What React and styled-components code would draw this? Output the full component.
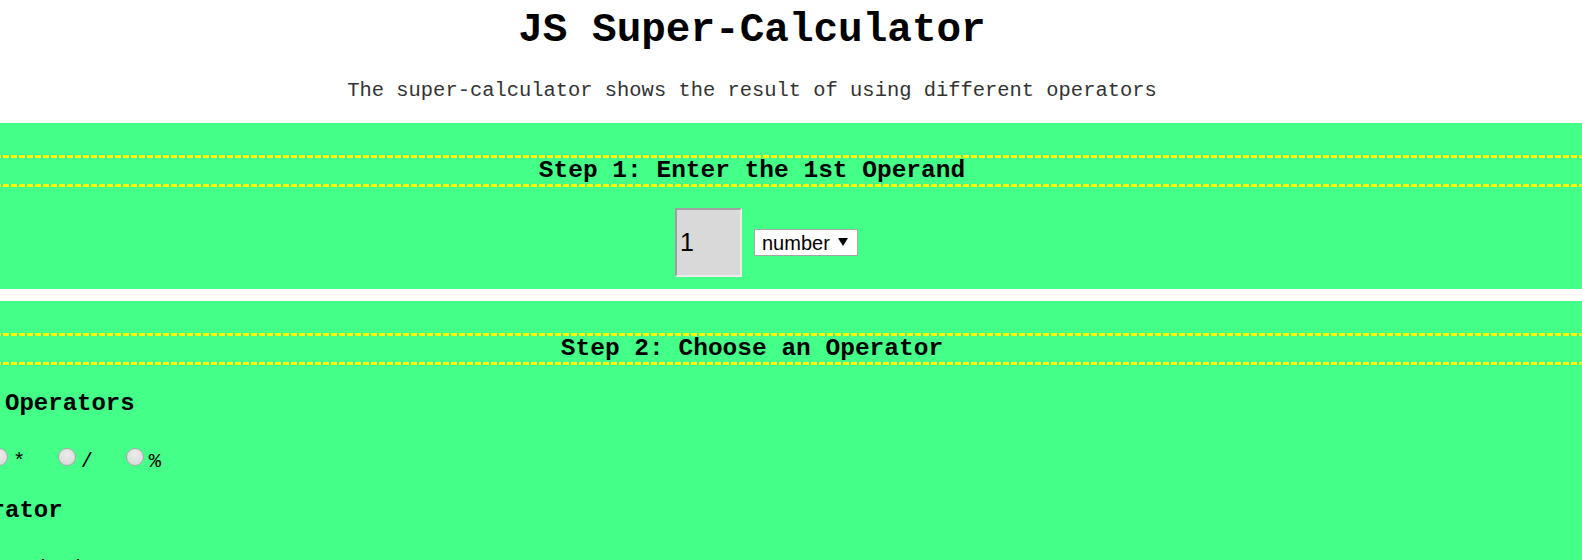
import React, { useState } from 'react';
import styled, { createGlobalStyle } from 'styled-components';

const GlobalStyle = createGlobalStyle`
  html, body {
    margin: 0;
    padding: 0;
    overflow: hidden;
    background: #ffffff;
  }
`;

// the view is scrolled a little to the right, so the page starts left of the window
const Page = styled.div`
  margin-left: -165px;
  width: 1834px;
  font-family: "Liberation Mono", "Courier New", monospace;
  color: #000000;
`;

const Title = styled.h1`
  margin: 0;
  padding-top: 7px;
  font-size: 41px;
  line-height: 46px;
  font-weight: bold;
  text-align: center;
`;

const Subtitle = styled.p`
  margin: 26px 0 21px 0;
  font-size: 20.45px;
  line-height: 23px;
  text-align: center;
  color: #333333;
`;

const Section = styled.section`
  background: #44ff88;
  padding-top: 32px;
  margin-bottom: 12px;
`;

const dashes = 'repeating-linear-gradient(90deg, #ffff00 0 6px, transparent 6px 8px)';

const StepTitle = styled.h2`
  margin: 0;
  padding: 3px 0;
  font-size: 24.5px;
  line-height: 26px;
  font-weight: bold;
  text-align: center;
  background:
    ${dashes} top left / 100% 3px no-repeat,
    ${dashes} bottom left / 100% 3px no-repeat;
`;

const InputRow = styled.div`
  display: flex;
  justify-content: center;
  align-items: center;
  padding: 21px 0 12px 0;
`;

const NumberInput = styled.input`
  box-sizing: border-box;
  width: 67px;
  height: 69px;
  margin: 0 12px 0 29px;
  padding: 0 3px;
  border-style: solid;
  border-width: 2px;
  border-color: #a0a0a0 #ececec #ececec #a0a0a0;
  background: #d9d9d9;
  font-family: "Liberation Sans", Arial, sans-serif;
  font-size: 25px;
  color: #000000;
  outline: none;
`;

const SelectWrap = styled.span`
  position: relative;
  display: inline-flex;
`;

const TypeSelect = styled.select`
  appearance: none;
  box-sizing: border-box;
  width: 104px;
  height: 27px;
  margin: 0;
  padding: 0 0 0 7px;
  border: 1px solid #a6a6a6;
  border-radius: 0;
  background: #ffffff;
  font-family: "Liberation Sans", Arial, sans-serif;
  font-size: 20px;
  color: #000000;
  outline: none;
`;

const Arrow = styled.svg`
  position: absolute;
  right: 10px;
  top: 9px;
  pointer-events: none;
`;

const GroupTitle = styled.h3`
  margin: ${p => p.$top}px 0 0 0;
  padding-left: 11.6px;
  font-size: 24px;
  line-height: 28px;
  font-weight: bold;
`;

const RadioRow = styled.div`
  margin-top: 30px;
  padding-left: 19px;
  font-size: 20.45px;
  line-height: 24px;
  white-space: nowrap;
`;

const Option = styled.label`
  display: inline-block;
  margin-right: 32.7px;
`;

const Radio = styled.input`
  appearance: none;
  box-sizing: border-box;
  width: 18px;
  height: 18px;
  margin: 0 5px 0 0;
  vertical-align: 1px;
  border: 1px solid #a9a9a9;
  border-radius: 50%;
  background: radial-gradient(circle at 50% 35%, #ececec 0%, #dcdcdc 70%);

  &:checked {
    background: radial-gradient(circle, #333333 0 4px, #dcdcdc 5px);
  }
`;

const operators = ['+', '-', '*', '/', '%'];

const App = () => {
  const [operand, setOperand] = useState('1');
  const [type, setType] = useState('number');
  const [operator, setOperator] = useState('');

  return (
    <Page>
      <GlobalStyle />
      <Title>JS Super-Calculator</Title>
      <Subtitle>The super-calculator shows the result of using different operators</Subtitle>

      <Section>
        <StepTitle>Step 1: Enter the 1st Operand</StepTitle>
        <InputRow>
          <NumberInput value={operand} onChange={e => setOperand(e.target.value)} />
          <SelectWrap>
            <TypeSelect value={type} onChange={e => setType(e.target.value)}>
              <option value="number">number</option>
              <option value="string">string</option>
              <option value="boolean">boolean</option>
            </TypeSelect>
            <Arrow width="10" height="8" viewBox="0 0 10 8">
              <polygon points="0,0 10,0 5,8" fill="#000" />
            </Arrow>
          </SelectWrap>
        </InputRow>
      </Section>

      <Section>
        <StepTitle>Step 2: Choose an Operator</StepTitle>
        <GroupTitle $top={24.5}>Arithmetic Operators</GroupTitle>
        <RadioRow>
          {operators.map(op => (
            <Option key={op}>
              <Radio
                type="radio"
                name="operator"
                checked={operator === op}
                onChange={() => setOperator(op)}
              />
              {op}
            </Option>
          ))}
        </RadioRow>
        <GroupTitle $top={23}>Typeof Operator</GroupTitle>
        <RadioRow>
          <Option>
            <Radio
              type="radio"
              name="operator"
              checked={operator === 'typeof'}
              onChange={() => setOperator('typeof')}
            />
            typeof (function)
          </Option>
        </RadioRow>
      </Section>
    </Page>
  );
};

export default App;
